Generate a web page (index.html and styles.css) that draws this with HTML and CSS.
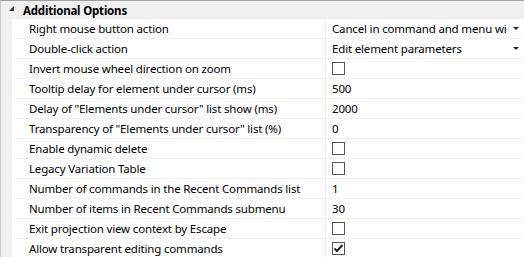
FILE: index.html
```html
<!DOCTYPE html>
<html>
<head>
  <title>Options</title>
  <link rel="stylesheet" href="styles.css">
</head>
<body>
  <div class="property-grid">
    <div class="category">
      <svg class="toggle" width="6" height="6" viewBox="0 0 6 6"><polygon points="5,0 5,5 0,5" fill="#333"/></svg>
      <span>Additional Options</span>
    </div>

    <div class="row">
      <div class="name">Right mouse button action</div>
      <div class="value combo"><span class="combo-text">Cancel in command and menu wi</span><span class="arrow"></span></div>
    </div>
    <div class="row">
      <div class="name">Double-click action</div>
      <div class="value combo"><span class="combo-text">Edit element parameters</span><span class="arrow"></span></div>
    </div>
    <div class="row">
      <div class="name">Invert mouse wheel direction on zoom</div>
      <div class="value"><span class="check"></span></div>
    </div>
    <div class="row">
      <div class="name">Tooltip delay for element under cursor (ms)</div>
      <div class="value">500</div>
    </div>
    <div class="row">
      <div class="name">Delay of "Elements under cursor" list show (ms)</div>
      <div class="value">2000</div>
    </div>
    <div class="row">
      <div class="name">Transparency of "Elements under cursor" list (%)</div>
      <div class="value">0</div>
    </div>
    <div class="row">
      <div class="name">Enable dynamic delete</div>
      <div class="value"><span class="check"></span></div>
    </div>
    <div class="row">
      <div class="name">Legacy Variation Table</div>
      <div class="value"><span class="check"></span></div>
    </div>
    <div class="row">
      <div class="name">Number of commands in the Recent Commands list</div>
      <div class="value">1</div>
    </div>
    <div class="row">
      <div class="name">Number of items in Recent Commands submenu</div>
      <div class="value">30</div>
    </div>
    <div class="row">
      <div class="name">Exit projection view context by Escape</div>
      <div class="value"><span class="check"></span></div>
    </div>
    <div class="row">
      <div class="name">Allow transparent editing commands</div>
      <div class="value">
        <span class="check checked">
          <svg width="11" height="11" viewBox="0 0 11 11"><path d="M1.5 5.5 L4 8 L9.5 2" fill="none" stroke="#222" stroke-width="2"/></svg>
        </span>
      </div>
    </div>
  </div>
</body>
</html>
```

FILE: styles.css
```css
body {
  margin: 0;
  font-family: "Noto Sans", sans-serif;
  font-size: 11.5px;
  letter-spacing: -0.17px;
  color: #000;
  background-color: #fff;
}

.property-grid {
  border-top: 1px solid #a0a0a0;
  border-left: 1px solid #c8c8c8;
  background-color: #f0f0f0;
  height: 256px;
  overflow: hidden;
}

/* Заголовок категории */
.category {
  display: flex;
  align-items: center;
  height: 18px;
  font-weight: bold;
  letter-spacing: -0.2px;
}

.category .toggle {
  margin-left: 8px;
  margin-right: 8px;
  margin-top: -2px;
}

/* Строки свойств */
.row {
  display: flex;
  height: 19px;
  margin-left: 11px;
  border-bottom: 1px solid #f0f0f0;
  background-color: #fff;
}

.name {
  width: 296px;
  padding-left: 17px;
  border-right: 1px solid #f0f0f0;
  line-height: 19px;
  white-space: nowrap;
  overflow: hidden;
}

.value {
  flex: 1;
  display: flex;
  align-items: center;
  padding-left: 6px;
  min-width: 0;
}

.combo-text {
  flex: 1;
  white-space: nowrap;
}

.arrow {
  width: 0;
  height: 0;
  margin: 0 5px 0 4px;
  border-left: 3px solid transparent;
  border-right: 3px solid transparent;
  border-top: 3px solid #222;
}

/* Флажки */
.check {
  display: inline-flex;
  align-items: center;
  justify-content: center;
  width: 11px;
  height: 11px;
  border: 1px solid #555;
  background-color: #fff;
}
```
